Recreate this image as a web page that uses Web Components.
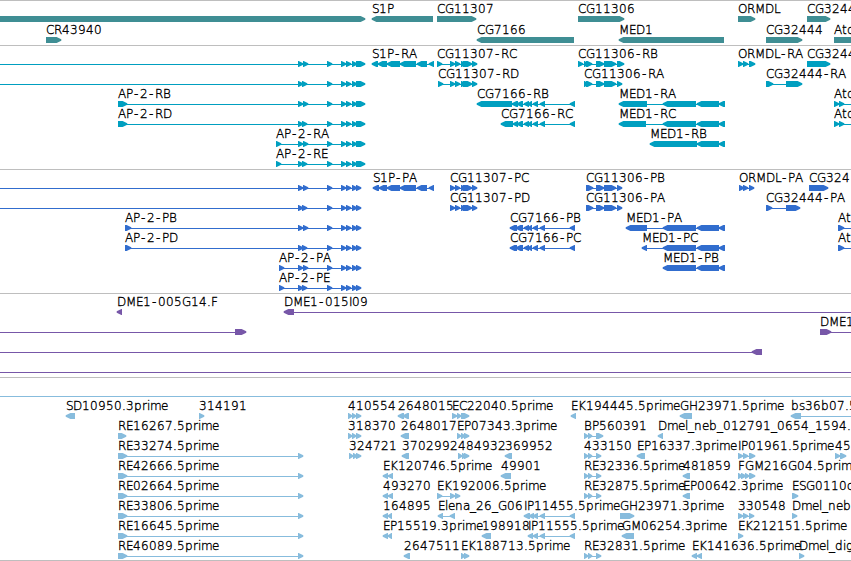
<!DOCTYPE html>
<html lang="en">
<head>
<meta charset="utf-8">
<title>Genome browser</title>
<style>
  body {
    margin: 0;
    background: #fff;
    font-family: "DejaVu Sans", sans-serif;
    overflow: hidden;
  }
</style>
</head>
<body>
<genome-browser></genome-browser>

<script>
// Pixel advances of the label font, so that labels stay on whole pixels
const ADVANCE = {
  A: 8, B: 8, C: 8, D: 9, E: 7, F: 7, G: 9, H: 9, I: 3, K: 8, L: 6, M: 10,
  O: 9, P: 7, R: 8, S: 7, a: 7, b: 8, c: 7, d: 8, e: 7, g: 8, i: 3, l: 3,
  m: 11, n: 8, o: 7, p: 8, r: 5, s: 6, t: 5, '.': 4, '-': 7, '_': 6
};

const HEAD = 5;

// Exons shared by several isoforms
const AP2 = '298:303,303:308,327:332,341:346,346:351,352:357';
const AP2B = '298:303,302:307,327:332,341:346,346:351,352:357';
const CG11307 = '450:455,455:460,461:466,463:472,472:477';
const CG7166 = '524:529,528:532,533:538,540:545,570:575';
const CG11306 = '596:604,604:616';
const MED1 = '663:696,697:719,719:725';
const RE = '118:127,298:303';
const RE32 = '584:588,588:592,596:601';

// Each feature: [name, strand, exons, span of the line (optional)]
const TRACKS = [
  {
    id: 'genes', color: '#3f8e94', pitch: 21, pad: 2,
    rows: [
      [['', '+', '-10:365'], ['S1P', '-', '372:433'], ['CG11307', '+', '437:476'],
       ['CG11306', '+', '578:624'], ['ORMDL', '+', '738:755'], ['CG3244', '+', '807:830']],
      [['CR43940', '+', '46:61'], ['CG7166', '-', '477:574'], ['MED1', '-', '619:724'],
       ['CG32444', '+', '766:802'], ['Ato', '+', '834:870']]
    ]
  },
  {
    id: 'transcripts', color: '#009fc0', pitch: 20, pad: 3,
    rows: [
      [['', '+', AP2 + ',356:365', '-10:360'],
       ['S1P-RA', '-', '372:378,378:387,387:400,400:416,417:427,429:434'],
       ['CG11307-RC', '+', '437:442,' + CG11307],
       ['CG11306-RB', '+', '578:583,584:588,586:592,' + CG11306 + ',617:624'],
       ['ORMDL-RA', '+', '738:743,743:748,749:755'], ['CG3244', '+', '807:830']],
      [['', '+', AP2B + ',356:365', '-10:360'], ['CG11307-RD', '+', '438:443,' + CG11307],
       ['CG11306-RA', '+', '584:588,586:592,' + CG11306 + ',617:622'],
       ['CG32444-RA', '+', '766:773,786:802']],
      [['AP-2-RB', '+', '118:127,' + AP2 + ',356:365'],
       ['CG7166-RB', '-', '477:512,512:518,517:523,' + CG7166],
       ['MED1-RA', '-', '619:647,' + MED1], ['Ato', '+', '834:839,839:844', '834:870']],
      [['AP-2-RD', '+', '118:127,' + AP2B + ',356:365'],
       ['CG7166-RC', '-', '501:513,513:518,517:523,' + CG7166],
       ['MED1-RC', '-', '619:646,' + MED1], ['Ato', '+', '834:839,839:844', '834:870']],
      [['AP-2-RA', '+', '276:281,' + AP2 + ',356:365'],
       ['MED1-RB', '-', '650:697,697:719,719:725']],
      [['AP-2-RE', '+', '276:281,' + AP2B + ',356:365']]
    ]
  },
  {
    id: 'proteins', color: '#316dce', pitch: 20, pad: 3,
    rows: [
      [['', '+', AP2 + ',356:361', '-10:360'],
       ['S1P-PA', '-', '373:379,379:387,387:400,400:416,417:427,429:434'],
       ['CG11307-PC', '+', CG11307], ['CG11306-PB', '+', '586:593,' + CG11306 + ',617:622'],
       ['ORMDL-PA', '+', '739:744,743:748,749:754'], ['CG324', '+', '809:828']],
      [['', '+', AP2B + ',356:361', '-10:360'], ['CG11307-PD', '+', CG11307],
       ['CG11306-PA', '+', '586:593,' + CG11306 + ',617:622'],
       ['CG32444-PA', '+', '766:772,786:800']],
      [['AP-2-PB', '+', '125:131,' + AP2 + ',356:361'],
       ['CG7166-PB', '-', '510:517,516:523,' + CG7166],
       ['MED1-PA', '-', '626:647,' + MED1], ['At', '+', '838:844', '838:870']],
      [['AP-2-PD', '+', '125:131,' + AP2B + ',356:361'],
       ['CG7166-PC', '-', '510:517,516:523,' + CG7166],
       ['MED1-PC', '-', '642:647,' + MED1], ['At', '+', '838:844', '838:870']],
      [['AP-2-PA', '+', '279:284,' + AP2 + ',356:361'], ['MED1-PB', '-', MED1]],
      [['AP-2-PE', '+', '279:284,' + AP2B + ',356:361']]
    ]
  },
  {
    id: 'clones', color: '#7757a8', pitch: 20, pad: 3,
    rows: [
      [['DME1-005G14.F', '-', '117:122'], ['DME1-015I09', '-', '284:294', '284:870']],
      [['', '+', '235:246', '-10:240'], ['DME1', '+', '820:831', '820:870']],
      [['', '-', '752:762', '-10:760']],
      [['', '+', '', '-10:870']]
    ]
  },
  {
    id: 'ests', color: '#87bcdd', pitch: 20, pad: 2,
    rows: [
      [['', '+', '', '-10:870']],
      [['SD10950.3prime', '-', '66:75'], ['314191', '+', '199:204'],
       ['410554', '+', '348:352,352:356,356:361'], ['2648015', '-', '398:404,403:409'],
       ['EC22040.5prime', '+', '452:457,457:461,461:469'], ['EK194445.5prime', '-', '571:576'],
       ['GH23971.5prime', '-', '680:692'], ['bs36b07.5', '-', '791:801', '791:870']],
      [['RE16267.5prime', '+', '118:126'], ['318370', '+', '348:352,352:356,356:361'],
       ['2648017', '-', '401:409'], ['EP07343.3prime', '+', '457:461,461:465,464:469'],
       ['BP560391', '+', '584:588,588:592,596:603'],
       ['Dmel_neb_012791_0654_1594.', '-', '658:663']],
      [['RE33274.5prime', '+', RE], ['324721', '+', '349:353,353:357,356:361'],
       ['3702992', '-', '402:409'], ['484932', '+', '458:462,462:466,464:469'],
       ['369952', '-', '505:512'], ['433150', '+', RE32], ['EP16337.3prime', '-', '637:645'],
       ['IP01961.5prime', '+', '738:743,743:748,749:755'], ['45', '+', '835:840,840:846']],
      [['RE42666.5prime', '+', RE], ['EK120746.5prime', '-', '383:388,388:393'],
       ['49901', '-', '501:511'], ['RE32336.5prime', '+', RE32], ['481859', '-', '683:690'],
       ['FGM216G04.5prim', '+', '738:742,741:746,745:749,749:755']],
      [['RE02664.5prime', '+', RE], ['493270', '-', '383:388,388:393'],
       ['EK192006.5prime', '+', '437:442,450:455,455:460'], ['RE32875.5prime', '+', RE32],
       ['EP00642.3prime', '-', '683:690'], ['ESG0110c', '+', '792:798']],
      [['RE33806.5prime', '+', RE], ['164895', '-', '383:388,388:392'],
       ['Elena_26_G06', '-', '438:443,450:455'],
       ['IP11455.5prime', '-', '524:530,529:534,533:538,540:545,570:575'],
       ['GH23971.3prime', '+', '620:634'], ['330548', '+', '738:743,743:748,749:754'],
       ['Dmel_neb', '+', '792:797']],
      [['RE16645.5prime', '+', RE], ['EP15519.3prime', '-', '383:388,388:392'],
       ['198918', '-', '482:491'], ['IP11555.5prime', '-', '528:533,533:538,540:545,570:575'],
       ['GM06254.3prime', '-', '622:634'], ['EK212151.5prime', '+', '738:743']],
      [['RE46089.5prime', '+', RE], ['2647511', '-', '404:410'],
       ['EK188713.5prime', '+', '461:465,464:469'], ['RE32831.5prime', '+', RE32],
       ['EK141636.5prime', '-', '692:697,697:702'], ['Dmel_dig', '+', '799:804']]
    ]
  }
];

const parseRanges = (text) =>
  (text || '').split(',').filter(Boolean).map((r) => r.split(':').map(Number));

/**
 * One feature on the sequence: a label over its exons and intron line
 * @attr name - Label
 * @attr strand - + or -, the way the arrows point
 * @attr exons - Comma separated start:end ranges
 * @attr span - start:end of the line, when it goes past the exons
 */
class GenomeFeature extends HTMLElement {
  constructor() {
    super();
    this.attachShadow({ mode: 'open' });
  }

  connectedCallback() {
    const name = this.getAttribute('name') || '';
    const exons = parseRanges(this.getAttribute('exons'));
    const span = parseRanges(this.getAttribute('span'))[0]
      || [exons[0][0], exons[exons.length - 1][1]];
    const start = span[0];
    const forward = this.getAttribute('strand') !== '-';
    this.style.marginLeft = `${start}px`;

    const shapes = exons.map(([a, b]) => this._arrow(a - start, b - start, forward)).join('');
    const line = exons.length === 1 && !this.hasAttribute('span')
      ? ''
      : `<rect x="1" y="18" width="${span[1] - start - 2}" height="1"/>`;

    let x = 0;
    const xs = [...name].map((ch) => {
      const at = ch === '-' ? x + 1 : x;
      x += ADVANCE[ch] || 8;
      return at;
    });

    this.shadowRoot.innerHTML = `
      <style>
        :host { display: block; grid-area: 1 / 1; justify-self: start; }
        svg { display: block; overflow: visible; fill: var(--track-color); }
        text {
          fill: #000;
          stroke: #000;
          stroke-width: 0.35px;
          font-size: 12px;
          font-weight: 200;
        }
      </style>
      <svg width="${span[1] - start}" height="20">
        ${line}${shapes}
        ${name ? `<text x="${xs.join(' ')}" y="12">${name}</text>` : ''}
      </svg>
    `;
  }

  _arrow(a, b, forward) {
    const head = Math.min(HEAD, b - a);
    const [tail, tip, dir] = forward ? [a, b, 1] : [b, a, -1];
    const neck = tip - dir * head;
    return `<path d="M${tail} 15H${neck + dir * 0.6}L${tip + dir * 0.3} 17.2V18.7L${neck + dir * 0.6} 21H${tail}z"/>`;
  }
}

/** A line of features that do not overlap */
class TrackRow extends HTMLElement {
  constructor() {
    super();
    this.attachShadow({ mode: 'open' }).innerHTML = `
      <style>
        :host { display: grid; height: var(--row-pitch, 20px); }
      </style>
      <slot></slot>
    `;
  }
}

/**
 * A track with a rule on top
 * @cssprop --track-color - Color of the features
 * @cssprop --row-pitch - Height of a row
 * @cssprop --track-pad - Space under the last row
 */
class GenomeTrack extends HTMLElement {
  constructor() {
    super();
    this.attachShadow({ mode: 'open' }).innerHTML = `
      <style>
        :host {
          display: block;
          border-top: 1px solid #bebebe;
          padding-bottom: var(--track-pad, 3px);
        }
      </style>
      <slot></slot>
    `;
  }
}

class GenomeBrowser extends HTMLElement {
  constructor() {
    super();
    this.attachShadow({ mode: 'open' });
  }

  connectedCallback() {
    this.shadowRoot.innerHTML = `
      <style>
        :host {
          display: block;
          width: 851px;
          height: 560px;
          border-bottom: 1px solid #bebebe;
          overflow: hidden;
        }
      </style>
      ${TRACKS.map((track) => this._track(track)).join('')}
    `;
  }

  _track({ id, color, pitch, pad, rows }) {
    return `
      <genome-track id="${id}" style="--track-color: ${color}; --row-pitch: ${pitch}px; --track-pad: ${pad}px">
        ${rows.map((row) => `<track-row>${row.map(this._feature).join('')}</track-row>`).join('')}
      </genome-track>
    `;
  }

  _feature([name, strand, exons, span]) {
    return `<genome-feature name="${name}" strand="${strand}" exons="${exons}"${span ? ` span="${span}"` : ''}></genome-feature>`;
  }
}

customElements.define('genome-feature', GenomeFeature);
customElements.define('track-row', TrackRow);
customElements.define('genome-track', GenomeTrack);
customElements.define('genome-browser', GenomeBrowser);
</script>
</body>
</html>
